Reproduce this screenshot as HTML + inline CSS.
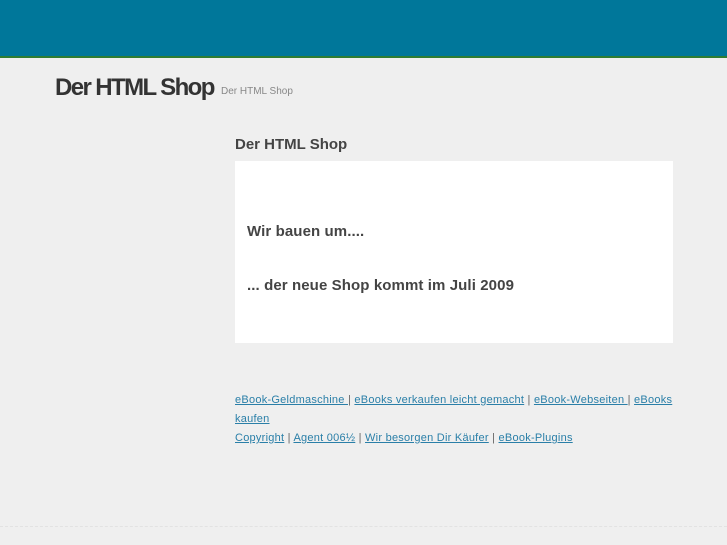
<!DOCTYPE html>
<html><head><meta charset="utf-8"><style>
body{margin:0;background:#efefef;font-family:"Liberation Sans",sans-serif;width:727px;height:545px;overflow:hidden;position:relative}
.top{position:absolute;left:0;top:0;width:727px;height:56px;background:#00779a;border-bottom:2px solid #2e7d32}
.t{position:absolute;left:55px;top:74px;font-size:24px;font-weight:bold;color:#333;letter-spacing:-1.6px}
.s{position:absolute;left:221px;top:86px;font-size:10px;color:#888}
.h{position:absolute;left:235px;top:136px;font-size:15px;font-weight:bold;color:#444}
.box{position:absolute;left:235px;top:161px;width:438px;height:182px;background:#fff}
.p{position:absolute;left:247px;font-size:15px;font-weight:bold;color:#444;letter-spacing:0.1px}
.links{position:absolute;left:235px;top:391px;width:442px;font-size:11px;line-height:19px;color:#666;letter-spacing:0.25px}
.links a{color:#2a7fa8;text-decoration:underline}
.line{position:absolute;left:0;top:526px;width:727px;border-top:1px dashed #e2e2e2}
</style></head><body>
<div class="top"></div>
<div class="t">Der HTML Shop</div>
<div class="s">Der HTML Shop</div>
<div class="h">Der HTML Shop</div>
<div class="box"></div>
<div class="p" style="top:223px">Wir bauen um....</div>
<div class="p" style="top:277px">... der neue Shop kommt im Juli 2009</div>
<div class="links"><a>eBook-Geldmaschine </a> | <a>eBooks verkaufen leicht gemacht</a> | <a>eBook-Webseiten </a> | <a>eBooks kaufen</a><br><a>Copyright</a> | <a>Agent 006½</a> | <a>Wir besorgen Dir Käufer</a> | <a>eBook-Plugins</a></div>
<div class="line"></div>
</body></html>
